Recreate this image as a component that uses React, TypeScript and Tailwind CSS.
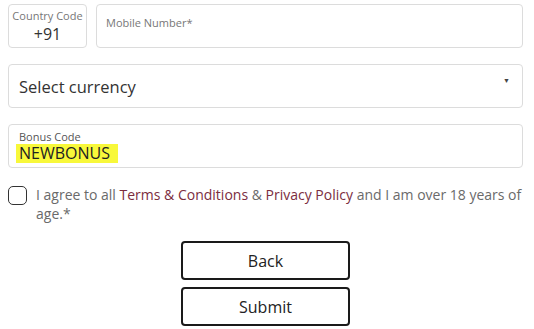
import React from "react";

export default function App() {
  return (
    <div className="w-[534px] h-[329px] bg-white text-[#333] overflow-hidden" style={{ fontFamily: '"Open Sans", sans-serif' }}>
      <div className="pl-[8px] pr-[11px] pt-[4px]">
        <div className="flex gap-[9px]">
          <div className="w-[79px] h-[44px] border border-[#dcdcdc] rounded-[4px] flex flex-col items-center pt-[4px]">
            <span className="text-[11px] leading-[14px] text-[#777]">Country Code</span>
            <span className="text-[16px] leading-[20px] text-[#333] mt-[1px]">+91</span>
          </div>
          <div className="flex-1 h-[44px] border border-[#dcdcdc] rounded-[4px] pl-[9px] pt-[4px]">
            <span className="text-[11px] leading-[14px] text-[#777]">Mobile Number*</span>
          </div>
        </div>
        <div className="mt-[16px] h-[44px] border border-[#dcdcdc] rounded-[4px] flex items-center justify-between pl-[10px] pr-[12px]">
          <span className="text-[16.5px] text-[#333] mt-[2px]">Select currency</span>
          <span className="text-[7px] text-[#444] -mt-[10px]">▼</span>
        </div>
        <div className="mt-[16px] h-[44px] border border-[#dcdcdc] rounded-[4px] pl-[7px] pt-[5px] flex flex-col items-start">
          <span className="text-[11px] leading-[13px] text-[#555] ml-[3px]">Bonus Code</span>
          <span className="text-[16px] leading-[19px] text-[#222] bg-[#f8f83a] pl-[3px] pr-[8px] mt-[1px]">NEWBONUS</span>
        </div>
        <div className="mt-[17px] flex items-start">
          <div className="w-[19px] h-[19px] mt-[1px] border-[1.5px] border-[#333] rounded-[5px] shrink-0" />
          <p className="ml-[9px] text-[14px] leading-[19px] text-[#6a6a6a]">
            I agree to all <span className="text-[#7b2d3e]">Terms &amp; Conditions</span> &amp;{" "}
            <span className="text-[#7b2d3e]">Privacy Policy</span> and I am over 18 years of age.*
          </p>
        </div>
        <div className="flex flex-col items-center gap-[7px] mt-[18px]">
          <button className="w-[169px] h-[39px] border-2 border-[#1a1a1a] rounded-[4px] text-[16px] text-[#222]">Back</button>
          <button className="w-[169px] h-[39px] border-2 border-[#1a1a1a] rounded-[4px] text-[16px] text-[#222]">Submit</button>
        </div>
      </div>
    </div>
  );
}
